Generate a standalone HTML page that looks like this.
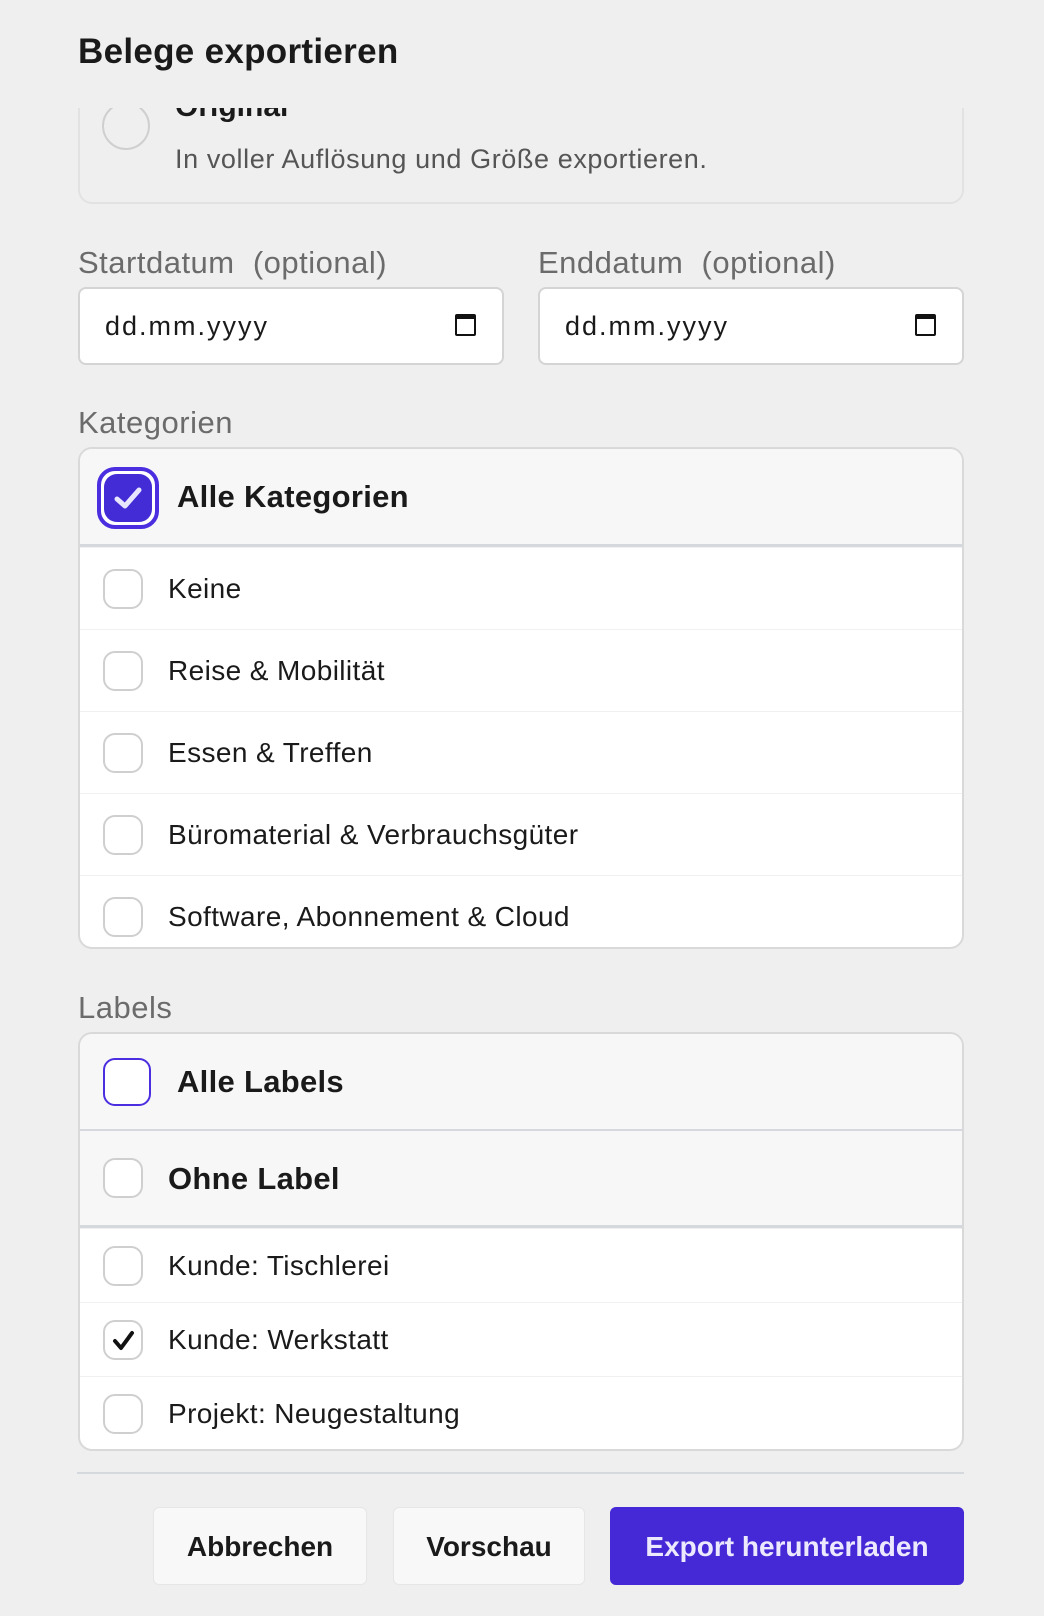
<!DOCTYPE html>
<html><head><meta charset="utf-8"><style>
*{box-sizing:border-box;margin:0;padding:0}
body{width:1044px;height:1616px;background:#efefef;font-family:"Liberation Sans",Arial,sans-serif;color:#1a1a1a;position:relative;overflow:hidden}
.a{position:absolute}
.lbl{color:#6b6b6b;font-size:31px;left:78px;letter-spacing:.5px}
.card{left:78px;width:886px;background:#fff;border:2px solid #d9d9d9;border-radius:14px;overflow:hidden}
.hdr{position:relative;background:#f7f7f7}
.row{position:relative;height:82px;border-top:1px solid #f0f0f0;font-size:28px;letter-spacing:.4px;line-height:82px;padding-left:88px}
.row:first-child{border-top:none}
.cb{position:absolute;left:23px;top:50%;margin-top:-20px;width:40px;height:40px;border:2px solid #cfcfcf;border-radius:12px;background:#fff}
.date{top:287px;height:78px;width:426px;background:#fff;border:2px solid #d4d4d4;border-radius:8px;font-size:27px;line-height:74px;padding-left:25px;letter-spacing:2px}
.cal{position:absolute;right:26px;top:25px;width:21px;height:22px;border:2.5px solid #111;border-top-width:5px;border-radius:2px}
.btn{top:1507px;height:78px;border-radius:6px;font-weight:bold;font-size:28px;line-height:78px;text-align:center;background:#f8f8f8;border:1px solid #e6e6e6}
</style></head><body>
<div class="a" style="left:78px;top:32px;font-size:35px;font-weight:bold;letter-spacing:.3px">Belege exportieren</div>

<div class="a" style="left:78px;top:108px;width:886px;height:96px;overflow:hidden">
 <div class="a" style="left:0;top:-40px;width:886px;height:136px;border:2px solid #e2e2e2;border-radius:14px"></div>
 <div class="a" style="left:24px;top:-6px;width:48px;height:48px;border:2px solid #cfcfcf;border-radius:50%"></div>
 <div class="a" style="left:97px;top:-18px;font-size:30px;font-weight:bold">Original</div>
 <div class="a" style="left:97px;top:36px;font-size:27px;color:#555;letter-spacing:.6px">In voller Auflösung und Größe exportieren.</div>
</div>

<div class="a lbl" style="top:245px">Startdatum&nbsp; (optional)</div>
<div class="a lbl" style="top:245px;left:538px">Enddatum&nbsp; (optional)</div>
<div class="a date" style="left:78px">dd.mm.yyyy<div class="cal"></div></div>
<div class="a date" style="left:538px">dd.mm.yyyy<div class="cal"></div></div>

<div class="a lbl" style="top:405px">Kategorien</div>
<div class="a card" style="top:447px;height:502px">
 <div class="hdr" style="height:98px;border-bottom:3px solid #d5d8dc">
  <div class="a" style="left:17px;top:18px;width:62px;height:62px;border:4px solid #4a2ee0;border-radius:18px;background:#fff;padding:3px">
   <div style="width:48px;height:48px;border-radius:13px;background:#432bd6;position:relative">
    <svg class="a" style="left:9px;top:10px" width="30" height="28" viewBox="0 0 30 28"><path d="M4 15 L12 22 L26 6" stroke="#e8e6ff" stroke-width="5" fill="none" stroke-linecap="round" stroke-linejoin="round"/></svg>
   </div></div>
  <div class="a" style="left:97px;top:30px;font-size:31px;font-weight:bold;letter-spacing:.3px">Alle Kategorien</div>
 </div>
 <div class="row"><div class="cb"></div>Keine</div>
 <div class="row"><div class="cb"></div>Reise &amp; Mobilität</div>
 <div class="row"><div class="cb"></div>Essen &amp; Treffen</div>
 <div class="row"><div class="cb"></div>Büromaterial &amp; Verbrauchsgüter</div>
 <div class="row"><div class="cb"></div>Software, Abonnement &amp; Cloud</div>
</div>

<div class="a lbl" style="top:990px">Labels</div>
<div class="a card" style="top:1032px;height:419px">
 <div class="hdr" style="height:97px;border-bottom:2px solid #d5d8dc">
  <div class="a" style="left:23px;top:24px;width:48px;height:48px;border:2px solid #4a2ee0;border-radius:12px;background:#fff"></div>
  <div class="a" style="left:97px;top:30px;font-size:31px;font-weight:bold;letter-spacing:.3px">Alle Labels</div>
 </div>
 <div class="hdr" style="height:97px;border-bottom:3px solid #d5d8dc">
  <div class="cb"></div>
  <div class="a" style="left:88px;top:30px;font-size:31px;font-weight:bold;letter-spacing:.3px">Ohne Label</div>
 </div>
 <div class="row" style="height:74px;line-height:74px"><div class="cb"></div>Kunde: Tischlerei</div>
 <div class="row" style="height:74px;line-height:74px"><div class="cb"><svg class="a" style="left:6px;top:7px" width="26" height="24" viewBox="0 0 26 24"><path d="M4 12 L10 19 L21 4" stroke="#111" stroke-width="4" fill="none" stroke-linecap="round" stroke-linejoin="round"/></svg></div>Kunde: Werkstatt</div>
 <div class="row" style="height:74px;line-height:74px"><div class="cb"></div>Projekt: Neugestaltung</div>
</div>

<div class="a" style="left:77px;top:1472px;width:887px;height:2px;background:#d5d8dc"></div>
<div class="a btn" style="left:153px;width:214px">Abbrechen</div>
<div class="a btn" style="left:393px;width:192px">Vorschau</div>
<div class="a btn" style="left:610px;width:354px;background:#4529d6;border-color:#4529d6;color:#ece9ff">Export herunterladen</div>
</body></html>
